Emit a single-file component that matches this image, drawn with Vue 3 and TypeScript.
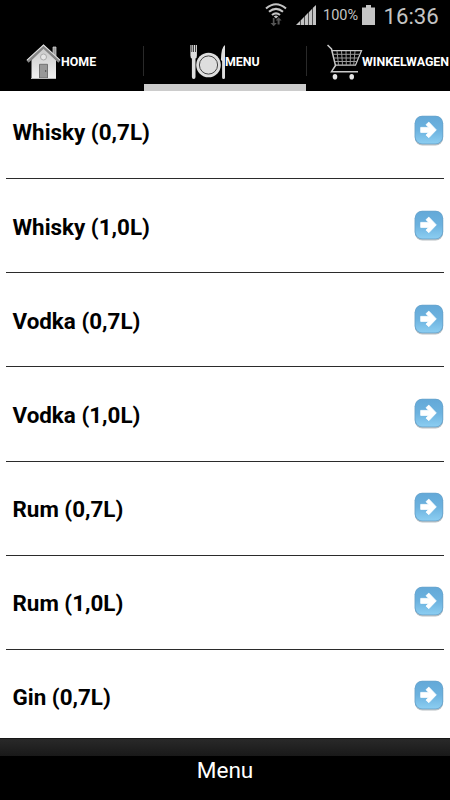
<script setup lang="ts">
const drinks: string[] = [
  'Whisky (0,7L)',
  'Whisky (1,0L)',
  'Vodka (0,7L)',
  'Vodka (1,0L)',
  'Rum (0,7L)',
  'Rum (1,0L)',
  'Gin (0,7L)',
]
</script>

<template>
  <div class="screen">
    <header class="status">
      <svg class="wifi" width="22" height="24" viewBox="0 0 22 24">
        <g fill="none" stroke="#c4c4c4" stroke-width="2.1">
          <path d="M1 5.5Q11 -3 21 5.5" />
          <path d="M4 8.8Q11 2.8 18 8.8" />
          <path d="M7 12Q11 8.6 15 12" />
        </g>
        <path d="M8.8 13.4Q11 11.8 13.2 13.4L11 15.6z" fill="#c4c4c4" />
        <path d="M7.8 15v5H5.5l3.2 3.3 3.1-3.3H9.5v-5zM12.6 21.5v-4h-2l3-3.2 3 3.2h-2v4z" fill="#555" />
      </svg>
      <svg class="signal" width="20" height="20" viewBox="0 0 20 20">
        <path d="M0 20L4 16V20zM4.6 20v-4.6l3.6-3.6V20zM8.8 20v-8.8l3.4-3.4V20zM12.8 20V7.2L16.2 3.8V20zM16.8 20V3l3.2-3v20z" fill="#c4c4c4" />
      </svg>
      <span class="percent">100%</span>
      <svg class="battery" width="13" height="20" viewBox="0 0 13 20">
        <path d="M4 0h5v2.5h4V20H0V2.5h4z" fill="#c4c4c4" />
      </svg>
      <span class="clock">16:36</span>
    </header>

    <nav class="tabs">
      <div class="tab home">
        <svg width="36" height="36" viewBox="0 0 36 36">
          <defs>
            <linearGradient id="wall" x1="0" y1="0" x2="0" y2="1">
              <stop offset="0" stop-color="#c9c9c9" />
              <stop offset="1" stop-color="#f0f0f0" />
            </linearGradient>
          </defs>
          <path d="M27 3h3v9l-3-3z" fill="#999" stroke="#ddd" stroke-width=".7" />
          <path d="M5.5 16L17.5 4 30 16v18.5H5.5z" fill="url(#wall)" />
          <path d="M1.5 17.5L17.5 2.7 33.5 17.5" fill="none" stroke="#858585" stroke-width="3.2" />
          <path d="M1 16.2L17.5 1 34 16.2" fill="none" stroke="#ddd" stroke-width="1.1" />
          <circle cx="17.5" cy="13" r="3" fill="#e6e6e6" stroke="#aaa" stroke-width="1" />
          <path d="M13.5 20.3h8V34h-8z" fill="#989898" stroke="#6a6a6a" stroke-width=".9" />
          <path d="M19.7 26v2" stroke="#555" />
          <path d="M5 34.5h25" stroke="#bbb" />
        </svg>
        <span>HOME</span>
      </div>
      <div class="tab menu">
        <svg width="36" height="36" viewBox="0 0 36 36">
          <g fill="#dedede">
            <path d="M.4 1h1.1v7h.7V1h1.1v7H4V1h1.1v7h.7V1h1.1v10.5q0 3-1.4 3V33q0 2-1.8 2t-1.8-2V14.5Q.4 14 .4 11.5z" />
            <circle cx="18.5" cy="21" r="12.3" />
            <path d="M35 1v32.5q0 1.5-1.4 1.5t-1.5-1.5V17l-1.2-1Q31.2 3 35 1z" />
          </g>
          <circle cx="18.5" cy="21" r="9.1" fill="none" stroke="#444" stroke-width="1" />
        </svg>
        <span>MENU</span>
      </div>
      <div class="tab cart">
        <svg width="36" height="36" viewBox="0 0 36 36">
          <g fill="none" stroke="#c9c9c9">
            <path d="M.5 1L4.5 5l4 16.5-4 6.2h26.5" stroke-width="1.5" />
            <path d="M5 6.7H34.5L28.5 21.2H8.5" stroke-width="1.3" />
            <path d="M6 10.3H33M7 14H31.5M8 17.5H30M10 7l1.5 14M14.5 7l1 14M19 7l.3 14M23.5 7l-.3 14M28 7l-1.3 14" stroke="#999" stroke-width="1" />
          </g>
          <ellipse cx="8" cy="32.7" rx="2.3" ry="2.8" fill="#e5e5e5" />
          <ellipse cx="24.7" cy="32.7" rx="2.3" ry="2.8" fill="#e5e5e5" />
        </svg>
        <span>WINKELWAGEN</span>
      </div>
    </nav>

    <ul class="list">
      <li v-for="drink in drinks" :key="drink">
        <span>{{ drink }}</span>
        <svg width="30" height="31" viewBox="0 0 30 31">
          <defs>
            <linearGradient id="button" x1="0" y1="0" x2="0" y2="1">
              <stop offset="0" stop-color="#64a9d8" />
              <stop offset=".5" stop-color="#6cb2df" />
              <stop offset="1" stop-color="#8bcdf1" />
            </linearGradient>
          </defs>
          <rect x=".9" y="2.4" width="28.2" height="28" rx="7.5" fill="#b9c0c4" />
          <rect x=".6" y=".8" width="28.6" height="28.4" rx="7.5" fill="#69a4cc" />
          <rect x="1.5" y="1.6" width="26.8" height="26.8" rx="6.6" fill="url(#button)" />
          <path d="M6.7 12.4h8L12 9.7l2.8-2.6 7.5 7.8-7.5 7.8-2.8-2.6 2.7-2.7h-8z" fill="#fff" stroke="#fff" stroke-width=".8" stroke-linejoin="round" />
        </svg>
      </li>
    </ul>

    <footer class="footer">
      <div class="strip"></div>
      <div class="title">Menu</div>
    </footer>
  </div>
</template>

<style>
body {
  margin: 0;
  overflow: hidden;
}
</style>

<style scoped>
.screen {
  width: 450px;
  height: 800px;
  overflow: hidden;
  display: flex;
  flex-direction: column;
  background: #fff;
  font-family: Roboto, "Liberation Sans", sans-serif;
}
svg {
  display: block;
  flex: none;
}
.status {
  flex: none;
  box-sizing: border-box;
  height: 32px;
  padding-left: 265px;
  display: flex;
  align-items: flex-start;
  background: #000;
  color: #c4c4c4;
  white-space: nowrap;
}
.wifi {
  margin-top: 3px;
}
.signal {
  margin: 5px 0 0 9px;
}
.percent {
  width: 36px;
  margin: 7px 0 0 7px;
  font-size: 14.5px;
  line-height: 18px;
}
.battery {
  margin: 5px 0 0 3px;
}
.clock {
  margin: 3px 0 0 8.5px;
  font-size: 22.2px;
  line-height: 27px;
}
.tabs {
  flex: none;
  height: 59px;
  display: grid;
  grid-template-columns: 143px 164px 164px;
  background: #000;
  color: #fff;
}
.tab {
  box-sizing: border-box;
  height: 59px;
  display: flex;
  align-items: flex-start;
  padding-top: 12px;
  font-size: 12.4px;
  line-height: 35px;
  font-weight: 700;
  white-space: nowrap;
}
.tab svg {
  margin-right: -1px;
}
.home {
  padding-left: 26px;
}
.menu {
  padding-left: 47px;
  background:
    linear-gradient(#ccc, #ccc) 1px 52px / 162px 7px no-repeat,
    linear-gradient(#292929, #292929) 0 14px / 1px 30px no-repeat,
    linear-gradient(#292929, #292929) 163px 14px / 1px 30px no-repeat;
}
.cart {
  padding-left: 20px;
}
.list {
  flex: none;
  box-sizing: border-box;
  height: 647px;
  margin: 0;
  padding: 0 6px;
  overflow: hidden;
  list-style: none;
}
.list li {
  box-sizing: border-box;
  height: 94.2px;
  padding: 0 0 0 6.5px;
  display: flex;
  align-items: flex-start;
  justify-content: space-between;
  border-bottom: 1px solid #2b2b2b;
}
.list li:first-child {
  height: 88px;
}
.list li span {
  padding-top: 33.5px;
  font-size: 22.4px;
  line-height: 28px;
  font-weight: 700;
  color: #000;
}
.list li svg {
  margin: 30.5px 0 0;
}
.list li:first-child span {
  padding-top: 27px;
}
.list li:first-child svg {
  margin-top: 24.3px;
}
.footer {
  flex: none;
  box-sizing: border-box;
  height: 62px;
  border-top: 1px solid #161616;
  background: #000;
  color: #fff;
}
.strip {
  height: 17px;
  background: linear-gradient(#292929, #191919);
}
.title {
  padding-top: 1px;
  text-align: center;
  font-size: 22.6px;
  line-height: 27px;
}
</style>
